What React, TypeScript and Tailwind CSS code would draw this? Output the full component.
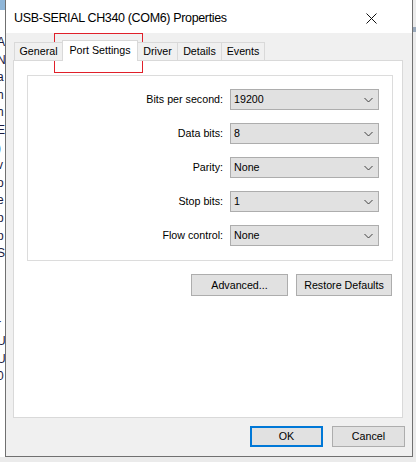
import React from 'react';

const font = { fontFamily: '"Liberation Sans", Arial, sans-serif' };

const rows = [
  { label: 'Bits per second:', value: '19200' },
  { label: 'Data bits:', value: '8' },
  { label: 'Parity:', value: 'None' },
  { label: 'Stop bits:', value: '1' },
  { label: 'Flow control:', value: 'None' },
];

const bgChars = ['A', 'N', 'a', 'h', 'h', 'E', ')', 'v', 'o', 'e', 'p', 'p', 'S', '', '', '', 'r', 'U', 'U', '0'];

const Chevron: React.FC = () => (
  <svg width="9" height="6" viewBox="0 0 9 6" className="shrink-0">
    <path d="M0.5 1 L4.5 5 L8.5 1" fill="none" stroke="#404040" strokeWidth="1" />
  </svg>
);

const Combo: React.FC<{ value: string }> = ({ value }) => (
  <div className="w-[149px] h-[21px] bg-[#e1e1e1] border border-[#adadad] flex items-center justify-between pl-[3px] pr-[5px] text-[10.7px] text-black">
    <span>{value}</span>
    <Chevron />
  </div>
);

const Tab: React.FC<{ label: string; w: string; selected?: boolean }> = ({ label, w, selected }) =>
  selected ? (
    <div className={`${w} h-[21px] bg-white border border-b-0 border-[#d9d9d9] flex items-center justify-center text-[10.7px] pb-[2px]`}>
      {label}
    </div>
  ) : (
    <div className={`${w} h-[19px] bg-[#f0f0f0] border border-[#d9d9d9] flex items-center justify-center text-[10.7px]`}>
      {label}
    </div>
  );

const App: React.FC = () => {
  return (
    <div className="relative w-[416px] h-[462px] flex bg-[#ebebeb] overflow-hidden text-black" style={font}>
      {/* window behind, left edge */}
      <div className="w-[5px] h-[457px] bg-white overflow-hidden flex flex-col">
        <div className="h-[10px] w-[5px] bg-[#8fb6d8] shrink-0" />
        <div className="flex flex-col -ml-[3px] pt-[24px] text-[12px] leading-[17.6px] text-[#1a1a40]">
          {bgChars.map((c, i) => (
            <span key={i} className="h-[17.6px]">{c}</span>
          ))}
        </div>
      </div>

      {/* dialog */}
      <div className="w-[408px] h-[457px] border border-t-0 border-[#707070] flex flex-col bg-[#f0f0f0]">
        <div className="h-[33px] bg-white flex items-center justify-between pl-[8px] pr-[35px] pt-[3px]">
          <span className="text-[12.5px] tracking-[-0.35px] text-black">USB-SERIAL CH340 (COM6) Properties</span>
          <svg width="11" height="11" viewBox="0 0 11 11">
            <path d="M0.5 0.5 L10.5 10.5 M10.5 0.5 L0.5 10.5" stroke="#111" strokeWidth="1" />
          </svg>
        </div>

        <div className="flex flex-col pl-[7px] pt-[7px]">
          <div className="flex items-end h-[21px] -mb-px relative z-10 pl-[1px]">
            <Tab label="General" w="w-[49px] -mr-px" />
            <Tab label="Port Settings" w="w-[76px]" selected />
            <Tab label="Driver" w="w-[41px] -ml-px" />
            <Tab label="Details" w="w-[45px] -ml-px" />
            <Tab label="Events" w="w-[44px] -ml-px" />
          </div>

          <div className="w-[390px] h-[358px] bg-white border border-[#d9d9d9] pl-[13px] pt-[14px]">
            <div className="w-[366px] h-[186px] border border-[#dcdcdc] flex flex-col items-end gap-[13px] pt-[13px] pr-[13px]">
              {rows.map((r) => (
                <div key={r.label} className="flex items-center gap-[7px] text-[10.7px]">
                  <span>{r.label}</span>
                  <Combo value={r.value} />
                </div>
              ))}
            </div>
            <div className="w-[365px] flex justify-end gap-[8px] mt-[13px] text-[10.7px]">
              <button className="w-[97px] h-[22px] bg-[#e1e1e1] border border-[#adadad]">Advanced...</button>
              <button className="w-[96px] h-[22px] bg-[#e1e1e1] border border-[#adadad]">Restore Defaults</button>
            </div>
          </div>

          <div className="w-[392px] flex justify-end gap-[9px] mt-[8px] text-[10.7px]">
            <button className="w-[73px] h-[21px] bg-[#e1e1e1] border-2 border-[#0078d7]">OK</button>
            <button className="w-[73px] h-[21px] bg-[#e1e1e1] border border-[#adadad]">Cancel</button>
          </div>
        </div>
      </div>

      {/* desktop to the right */}
      <div className="flex-1 h-full flex flex-col">
        <div className="h-[27px]" />
        <div className="h-[5px] bg-[#9aa9bb]" />
      </div>

      {/* red annotation box */}
      <div className="absolute left-[54px] top-[33px] w-[89px] h-[40px] border border-[#e0202a]" />
    </div>
  );
};

export default App;
